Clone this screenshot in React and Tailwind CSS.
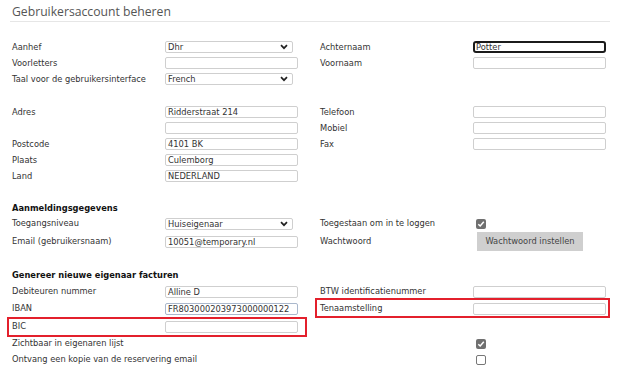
import React from "react";

const font = { fontFamily: '"DejaVu Sans", Verdana, sans-serif' };

function Input({ value = "", focused = false, tint = false }) {
  const border = focused
    ? "border-2 border-[#1b1b1b] rounded-[3px] px-[1px]"
    : tint
    ? "border border-[#aab8cc] rounded-[2px] px-[2px]"
    : "border border-[#cfcfcf] rounded-[2px] px-[2px]";
  return (
    <div
      className={`h-[12px] w-[133px] bg-white overflow-hidden whitespace-nowrap leading-[10px] text-[#333] flex items-center ${border}`}
    >
      {value}
    </div>
  );
}

function Select({ value }) {
  return (
    <div className="h-[12px] w-[128px] border border-[#cfcfcf] rounded-[2px] bg-white px-[2px] flex items-center justify-between text-[#333]">
      <span className="leading-[10px]">{value}</span>
      <svg width="8" height="6" viewBox="0 0 8 6" className="mr-[2px]">
        <path d="M1 1.2 L4 4.2 L7 1.2" fill="none" stroke="#222" strokeWidth="1.7" />
      </svg>
    </div>
  );
}

function Check({ checked }) {
  if (checked) {
    return (
      <div className="ml-[3px] w-[10px] h-[10px] rounded-[2px] bg-[#707070] flex items-center justify-center">
        <svg width="8" height="8" viewBox="0 0 8 8">
          <path d="M1.3 4.2 L3.2 6 L6.8 1.8" fill="none" stroke="#fff" strokeWidth="1.5" />
        </svg>
      </div>
    );
  }
  return <div className="ml-[3px] w-[10px] h-[10px] rounded-[2px] border border-[#777] bg-white" />;
}

function Row({ h = "h-[16px]", label, field, rlabel, rfield, boxLeft, boxRight }) {
  return (
    <div className={`flex items-center ${h}`}>
      <div className="relative flex items-center h-full">
        {boxLeft && (
          <span className="absolute -left-[3px] -right-[9px] top-0 -bottom-px border-2 border-[#e3202c] pointer-events-none" />
        )}
        <div className="w-[155px] pl-[2px] whitespace-nowrap">{label}</div>
        <div className="w-[133px]">{field}</div>
      </div>
      <div className="w-[22px]" />
      <div className="relative flex items-center h-full">
        {boxRight && (
          <span className="absolute -left-[5px] -right-[4px] -top-[2px] -bottom-px border-2 border-[#e3202c] pointer-events-none" />
        )}
        <div className="w-[153px] whitespace-nowrap">{rlabel}</div>
        <div className="w-[133px]">{rfield}</div>
      </div>
    </div>
  );
}

function Heading({ children, h }) {
  return <div className={`${h} flex items-center pl-[2px] font-bold text-[#111]`}>{children}</div>;
}

export default function App() {
  return (
    <div className="w-[625px] h-[379px] bg-white overflow-hidden">
      <div className="w-[600px] ml-[10px] text-[8.3px] text-[#333]" style={font}>
        <div
          className="h-[22px] border-b border-[#e6e6e6] pl-[2px] pt-[3px] text-[12.2px] leading-[17px] text-[#555]"
          style={{ fontFamily: '"Open Sans", sans-serif' }}
        >
          Gebruikersaccount beheren
        </div>

        <div className="mt-[17px]">
          <Row label="Aanhef" field={<Select value="Dhr" />} rlabel="Achternaam" rfield={<Input value="Potter" focused />} />
          <Row label="Voorletters" field={<Input />} rlabel="Voornaam" rfield={<Input />} />
          <Row label="Taal voor de gebruikersinterface" field={<Select value="French" />} />
        </div>

        <div className="mt-[17px]">
          <Row label="Adres" field={<Input value="Ridderstraat 214" />} rlabel="Telefoon" rfield={<Input />} />
          <Row field={<Input />} rlabel="Mobiel" rfield={<Input />} />
          <Row label="Postcode" field={<Input value="4101 BK" />} rlabel="Fax" rfield={<Input />} />
          <Row label="Plaats" field={<Input value="Culemborg" />} />
          <Row label="Land" field={<Input value="NEDERLAND" />} />
        </div>

        <div className="mt-[16px]">
          <Heading h="h-[16px]">Aanmeldingsgegevens</Heading>
          <Row
            h="h-[15px]"
            label="Toegangsniveau"
            field={<Select value="Huiseigenaar" />}
            rlabel="Toegestaan om in te loggen"
            rfield={<Check checked />}
          />
          <Row
            h="h-[21px]"
            label="Email (gebruikersnaam)"
            field={<Input value="10051@temporary.nl" />}
            rlabel="Wachtwoord"
            rfield={
              <button className="ml-[4px] w-[106px] h-[19px] bg-[#cfcfcf] text-[#444] text-[8.3px]" style={font}>
                Wachtwoord instellen
              </button>
            }
          />
        </div>

        <div className="mt-[16px]">
          <Heading h="h-[15px]">Genereer nieuwe eigenaar facturen</Heading>
          <Row
            h="h-[17px]"
            label="Debiteuren nummer"
            field={<Input value="Alline D" />}
            rlabel="BTW identificatienummer"
            rfield={<Input />}
          />
          <Row
            h="h-[17px]"
            label="IBAN"
            field={<Input value="FR803000203973000000122" tint />}
            rlabel="Tenaamstelling"
            rfield={<Input />}
            boxRight
          />
          <Row h="h-[19px]" label="BIC" field={<Input />} boxLeft />
          <Row h="h-[15px]" label="Zichtbaar in eigenaren lijst" rfield={<Check checked />} />
          <Row h="h-[17px]" label="Ontvang een kopie van de reservering email" rfield={<Check />} />
        </div>
      </div>
    </div>
  );
}
